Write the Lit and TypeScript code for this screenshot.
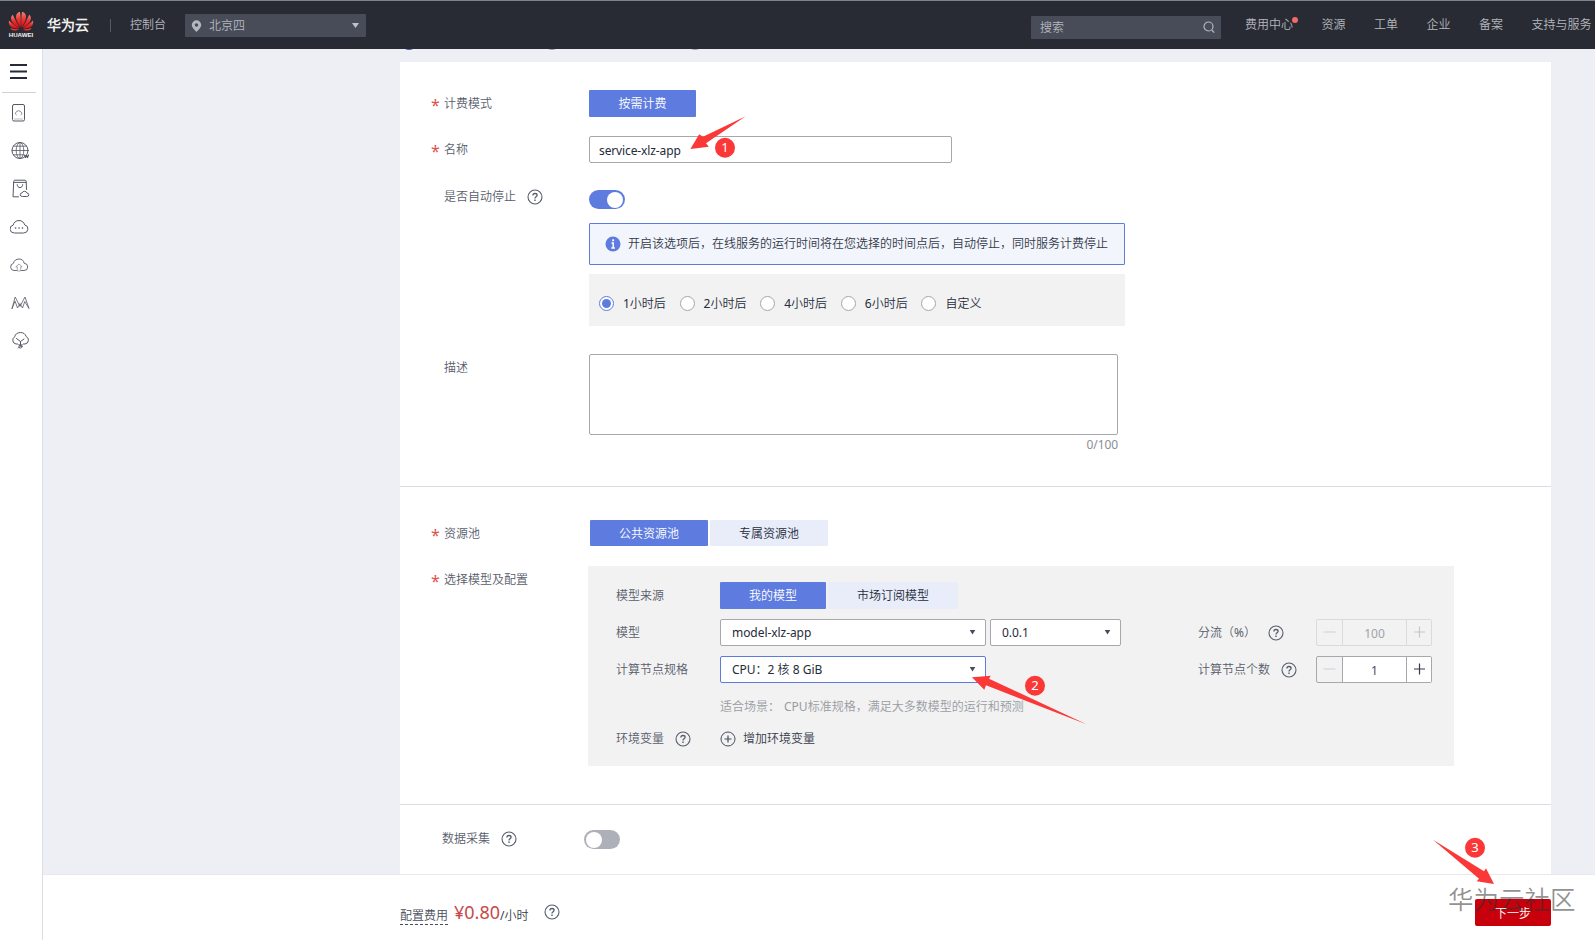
import { LitElement, html, css, svg } from "lit";
import { customElement } from "lit/decorators.js";

const help = html`<svg class="help" width="16" height="16" viewBox="0 0 16 16" fill="none" stroke="#575d6c">
  <circle cx="8" cy="8" r="7" stroke-width="1.1" />
  <path d="M5.9 6.5C5.9 5.2 6.8 4.5 8 4.5s2.1.7 2.1 1.8c0 1.5-2.1 1.6-2.1 3.2" stroke-width="1.3" />
  <path d="M8 10.6v1.4" stroke-width="1.4" />
</svg>`;

const caret = html`<svg class="caret" width="7" height="5" viewBox="0 0 7 5"><path d="M.7 0h5.600L3.500 4.500z" fill="#464c59" /></svg>`;

const sideIcon = (body: unknown) =>
  html`<svg class="side-icon" width="20" height="20" viewBox="0 0 20 20" fill="none" stroke="#555965" stroke-width="1" stroke-linecap="round" stroke-linejoin="round">${body}</svg>`;

const sideIcons = [
  svg`<rect x="2.500" y="1.500" width="12" height="16.500" rx="1.500"/><path d="M6.300 11.800a1.500 1.500 0 0 1 .2-2.800 2.300 2.300 0 0 1 4.200 0 1.500 1.500 0 0 1 .3 2.800" stroke-width=".7"/><path d="M4.500 16h8" stroke-width=".4"/>`,
  svg`<circle cx="10" cy="9.500" r="8"/><ellipse cx="10" cy="9.500" rx="3.800" ry="8" stroke-width=".8"/><path d="M10 1.500v16M2 9.500h16M3.500 5.200h13M3.500 13.800h10" stroke-width=".8"/><path d="M14.500 14l1 2.500 1-2 1 2 1-2.500" stroke-width="1.200"/>`,
  svg`<path d="M8.500 17.800H3L3.700 2.500C3.700 1.500 4.200 1.200 5 1.200h10c.8 0 1.200.5 1.200 1.300l.3 8M3.700 3.400h12.500"/><path d="M7.200 5.700c0 4 5.500 4 5.500 0"/><path d="M12 17.500a1.800 1.800 0 0 1 .1-3.600 2.600 2.600 0 0 1 4.900.2 1.700 1.700 0 0 1 .2 3.400z"/>`,
  svg`<path d="M4 16a4 4 0 0 1-.8-7.900C3.600 5.600 6 3.500 9 3.500s5 2 5.700 4.400A4.100 4.100 0 0 1 14 16z"/><path d="M5.500 11h.1M9 11h.1M12.500 11h.1" stroke-width="1.600"/>`,
  svg`<path d="M6.500 15.500H4a3.600 3.600 0 0 1-.6-7.100C4 5.500 6.200 4 9 4s4.700 1.500 5.200 4.300A3.600 3.600 0 0 1 14 15.500h-2.500" stroke-width=".9"/><path d="M7.300 15.600v-3.800H5.800L9 9l3.200 2.800h-1.500v3.800z" stroke-width=".5"/>`,
  svg`<path d="M2 15.500L5.200 4 10 13.500 15 4 19 15.500 14.800 8.500 12.500 15 10 10.500 7.500 15 5.200 8.500z" stroke-width=".8"/>`,
  svg`<path d="M7.500 13H6a3.900 3.900 0 0 1-1.300-7.200C5 3.300 7.500 1.500 10.500 1.500s5 1.600 5.700 4.100A3.900 3.900 0 0 1 15 13h-1.500"/><path d="M6.500 7.500l4 3L14 8M10.500 10.500v4"/><circle cx="10.500" cy="15.500" r="1.500"/><path d="M8.500 13.800h4M8 17l2.500-1.500" stroke-width=".8"/>`,
];

@customElement("app-root")
export class AppRoot extends LitElement {
  static styles = css`
    :host {
      display: flex; flex-direction: column; position: relative;
      width: 1595px; height: 940px; overflow: hidden; box-sizing: border-box;
      font: 12px/20px "Noto Sans", "Noto Sans CJK SC DemiLight", "Noto Sans CJK SC", sans-serif;
      color: #252b3a; background: #eeeff5;
    }
    * { box-sizing: border-box; }
    svg { display: block; flex: none; }
    .header { height: 49px; flex: none; display: flex; background: #282b33; border-top: 1px solid #7b848a; color: #b4b7bd; white-space: nowrap; line-height: 48px; }
    .logo { margin: 9px 0 0 8px; }
    .brand { margin-left: 13px; width: 63px; font-size: 14px; font-weight: 600; color: #f2f2f2; }
    .vline { width: 1px; height: 13px; background: #555963; margin: 18px 19px 0 0; }
    .console { width: 55px; }
    .region { width: 181px; height: 23px; margin-top: 13px; background: #484c59; border-radius: 1px; display: flex; align-items: center; line-height: 21px; padding: 0 7px 0 6px; }
    .region span { flex: 1; margin-left: 7px; }
    .region span, .region .tri { margin-top: -1px; }
    .search { width: 190px; height: 23px; margin: 15px 24px 0 665px; background: #484c59; border-radius: 1px; display: flex; align-items: center; justify-content: space-between; padding: 0 6px 0 9px; line-height: 25px; }
    .nav { display: flex; gap: 28.500px; }
    .nav span { position: relative; }
    .dot { position: absolute; right: -5px; top: 16px; width: 6px; height: 6px; border-radius: 50%; background: #f06a6a; }
    .body { flex: 1; display: flex; min-height: 0; }
    .side { width: 43px; background: #fff; border-right: 1px solid #dcdee4; flex: none; padding-top: 15px; }
    .burger { margin-left: 10px; }
    .side-sep { height: 1px; background: #d0d1d6; margin: 13px 6px 10px 2px; }
    .side-icon { margin: 0 0 18px 10px; }
    .side-icons { display: flex; flex-direction: column; }
    .main { flex: 1; display: flex; flex-direction: column; min-width: 0; }
    .scroll { flex: 1; overflow: hidden; padding-left: 357px; min-height: 0; }
    .steps { height: 13px; display: flex; gap: 127px; padding-left: 1px; overflow: hidden; }
    .steps i { width: 16px; height: 16px; border-radius: 50%; background: #a0a3b3; margin-top: -15px; }
    .steps i:first-child { background: #4a58a8; }
    .card { width: 1151px; background: #fff; }
    .section { border-bottom: 1px solid #dcdde2; padding-left: 32px; }
    .s1 { height: 425px; padding-top: 28px; }
    .s2 { height: 318px; padding-top: 33px; }
    .s3 { height: 90px; padding: 20px 0 0 9px; border: 0; }
    .row { display: flex; align-items: flex-start; }
    .lab { width: 157px; height: 27px; padding-left: 12px; line-height: 28px; color: #575d6c; display: flex; align-items: center; position: relative; flex: none; white-space: nowrap; }
    .lab.req::before { content: "*"; position: absolute; left: -1px; top: 1px; color: #e0504a; font-size: 16px; }
    .lab .help { margin-left: 11px; }
    .btn { height: 27px; line-height: 28px; text-align: center; background: #e9edfa; color: #252b3a; border-radius: 1px; }
    .btn.on { background: #5e7ce0; color: #fff; font-weight: 500; }
    .group { display: flex; gap: 2px; }
    .pool { margin-left: 1px; }
    .w107 { width: 107px; } .w118 { width: 118px; height: 26px; line-height: 27px; } .w106 { width: 106px; } .w130 { width: 130px; }
    .input { width: 363px; height: 27px; border: 1px solid #a6a8ae; border-radius: 2px; line-height: 27px; padding-left: 9px; letter-spacing: -.12px; }
    .r2 { margin-top: 19px; }
    .r3 { margin-top: 24px; }
    .r3 .lab { line-height: 19px; height: 19px; }
    .r4 { margin-top: 28px; }
    .r5 { margin-top: 19px; }
    .toggle { width: 36px; height: 19px; border-radius: 10px; background: #5e7ce0; display: flex; justify-content: flex-end; align-items: center; padding: 0 2px; }
    .toggle i { width: 16px; height: 16px; border-radius: 50%; background: #fff; }
    .toggle.off { background: #adb0b8; justify-content: flex-start; }
    .r3 .toggle { margin-top: 3px; }
    .alert { margin-top: 14px; width: 536px; height: 42px; background: #f2f5fc; border: 1px solid #5e7ce0; border-radius: 1px; display: flex; align-items: center; padding-left: 15px; gap: 7px; color: #343a4a; white-space: nowrap; }
    .radios { margin-top: 9px; width: 536px; height: 52px; background: #f2f2f2; display: flex; align-items: center; padding: 8px 0 0 10px; }
    .radio { display: flex; align-items: center; gap: 9px; width: 80.600px; white-space: nowrap; line-height: 22px; }
    .radio i { width: 15px; height: 15px; border-radius: 50%; border: 1px solid #a3a6ac; background: #fff; display: grid; place-items: center; flex: none; margin-bottom: 1px; }
    .radio.sel i { border-color: #5e7ce0; }
    .radio.sel i::after { content: ""; width: 9px; height: 9px; border-radius: 50%; background: #5e7ce0; }
    .area { width: 529px; height: 81px; border: 1px solid #a6a8ae; border-radius: 2px; }
    .count { text-align: right; line-height: 19px; color: #8a8e99; letter-spacing: -.1px; }
    .panel { width: 866px; height: 200px; background: #f2f2f2; margin-left: -1px; padding: 16px 22px 0 28px; display: flex; flex-direction: column; gap: 10px; }
    .prow { display: flex; height: 27px; line-height: 27px; color: #575d6c; white-space: nowrap; }
    .plab { width: 104px; display: flex; align-items: center; flex: none; }
    .plab .help { margin-left: 11px; }
    .select { width: 266px; height: 27px; border: 1px solid #a6a8ae; border-radius: 2px; background: #fff; display: flex; align-items: center; justify-content: space-between; padding: 0 9px 0 11px; line-height: 26px; color: #252b3a; letter-spacing: -.06px; }
    .select .caret { margin-bottom: 1px; }
    .select.focus { border-color: #5e7ce0; letter-spacing: 0; }
    .select.ver { width: 131px; margin-left: 4px; }
    .spacer { flex: 1; }
    .qlab { width: 118px; display: flex; align-items: center; line-height: 29px; }
    .qlab .help { margin: 1px 0 0 11px; }
    .qlab.pct .help { margin-left: 12px; }
    .step { width: 116px; height: 27px; border: 1px solid #a6a8ae; border-radius: 2px; display: flex; line-height: 27px; color: #464c59; text-align: center; }
    .step > * { display: grid; place-items: center; }
    .step .m { width: 25px; } .step .p { width: 25px; border-left: 1px solid #a6a8ae; background: #fff; }
    .step svg { margin-bottom: 1px; }
    .step .v { flex: 1; border-left: 1px solid #a6a8ae; background: #fff; }
    .step.dis, .step.dis .v, .step.dis .p { border-color: #d9dadd; background: #f2f2f2; color: #a0a3aa; }
    .hint { color: #999ca3; }
    .hint-text { margin-left: 4px; }
    .env { margin-top: -5px; }
    .add { display: flex; align-items: center; gap: 7px; color: #343a4a; line-height: 29px; }
    .s3 .lab { padding-left: 33px; width: 175px; }
    .s3 .toggle { margin-top: 5px; }
    .footer { height: 66px; flex: none; background: #fff; border-top: 1px solid #e8e9ed; display: flex; align-items: flex-start; padding-left: 357px; position: relative; white-space: nowrap; }
    .cost { margin-top: 30px; height: 20px; border-bottom: 1px dashed #464c59; color: #464c59; line-height: 21px; }
    .price { margin: 22px 0 0 6px; font-size: 18px; line-height: 30px; color: #c7494a; }
    .unit { margin-top: 30px; line-height: 21px; color: #343a4a; }
    .footer .help { margin: 29px 0 0 15px; }
    .next { position: absolute; left: 1432px; top: 24px; width: 76px; height: 27px; background: #c7000b; border-radius: 2px; }
    .next-label { position: absolute; left: 1432px; top: 24px; width: 76px; line-height: 29px; text-align: center; color: #fff; font-weight: 500; }
    .mark { position: absolute; left: 1405px; top: 6px; font-size: 25.500px; line-height: 36px; color: rgba(50, 50, 50, .54); }
    .marks { position: absolute; left: 0; top: 0; pointer-events: none; }
    .num { font: 13px "Noto Sans", sans-serif; fill: #fff; text-anchor: middle; }
  `;

  private renderHeader() {
    return html`<div class="header">
      <svg class="logo" width="26" height="28" viewBox="0 0 26 28">
        <defs><linearGradient id="g" x1="0" y1="0" x2="0" y2="1"><stop offset="0" stop-color="#f2837a" /><stop offset=".5" stop-color="#e8302c" /><stop offset="1" stop-color="#d01018" /></linearGradient></defs>
        <g fill="url(#g)">
          <path d="M12.600 17.500C9 12.500 7 8 8.500 4.500 9.500 2.300 11 2 12 2c.8 5 .9 10 .6 15.500z" />
          <path d="M13.400 17.500C17 12.500 19 8 17.500 4.500 16.500 2.300 15 2 14 2c-.8 5-.9 10-.6 15.500z" />
          <path d="M11.800 17.800C8.500 12.500 6.500 8.500 4.800 4.800 2.500 6.500 2.800 9.500 4 11.500c1.800 3 4.500 5 7.800 6.300z" />
          <path d="M14.200 17.800C17.500 12.500 19.500 8.500 21.200 4.800 23.500 6.500 23.200 9.500 22 11.500c-1.800 3-4.500 5-7.800 6.300z" />
          <path d="M11.300 18.500C7 15.500 3.500 13 1 10.500.2 13.500 1.500 15.800 3.500 17c2.200 1.300 5 1.600 7.800 1.500z" />
          <path d="M14.700 18.500C19 15.500 22.500 13 25 10.500c.8 3-.5 5.300-2.500 6.500-2.200 1.300-5 1.600-7.800 1.500z" />
          <path d="M11 19.200c-3 .2-6 0-8.500-.9 1.200 2.800 4.500 3.500 8.500.9zM15 19.200c3 .2 6 0 8.500-.9-1.200 2.800-4.500 3.500-8.500.9z" />
        </g>
        <text x="13" y="27.300" text-anchor="middle" font-family="Liberation Sans" font-weight="700" font-size="6.200" textLength="24.500" lengthAdjust="spacingAndGlyphs" fill="#f2f2f2">HUAWEI</text>
      </svg>
      <span class="brand">华为云</span>
      <span class="vline"></span>
      <span class="console">控制台</span>
      <div class="region">
        <svg width="11" height="13" viewBox="0 0 10 13"><path fill-rule="evenodd" d="M5 1.300a4.700 4.700 0 0 1 4.700 4.700C9.700 9 5 12.800 5 12.800S.3 9 .3 6A4.700 4.700 0 0 1 5 1.300zM5 4.200a1.800 1.800 0 1 0 0 3.600 1.800 1.800 0 0 0 0-3.600z" fill="#b4b7bd" /></svg>
        <span>北京四</span>
        <svg class="tri" width="7" height="5" viewBox="0 0 7 5"><path d="M0 0h7L3.500 5z" fill="#c0c2c8" /></svg>
      </div>
      <div class="search"><span>搜索</span>
        <svg width="12" height="13" viewBox="0 0 12 13" fill="none" stroke="#b4b7bd" stroke-width="1.200"><circle cx="5.500" cy="5.500" r="4.500" /><path d="M8.700 9l2.600 2.600" /></svg>
      </div>
      <div class="nav"><span>费用中心<i class="dot"></i></span><span>资源</span><span>工单</span><span>企业</span><span>备案</span><span>支持与服务</span></div>
    </div>`;
  }

  private stepper(value: string, disabled: boolean) {
    const plus = disabled ? "#c5c7cc" : "#343a4a";
    return html`<div class="step ${disabled ? "dis" : ""}">
      <span class="m"><svg width="13" height="13"><path d="M.5 6h12" stroke="#cfd0d4" /></svg></span>
      <span class="v">${value}</span>
      <span class="p"><svg width="13" height="13"><path d="M1 6h11M6.500.5v11" stroke=${plus} stroke-width="1.200" /></svg></span>
    </div>`;
  }

  render() {
    return html`
      ${this.renderHeader()}
      <div class="body">
        <div class="side">
          <svg class="burger" width="18" height="15" viewBox="0 0 18 15"><path d="M0 1h17M0 7.500h17M0 14h17" stroke="#252b3a" stroke-width="1.800" /></svg>
          <div class="side-sep"></div>
          <div class="side-icons">${sideIcons.map(sideIcon)}</div>
        </div>
        <div class="main">
          <div class="scroll">
            <div class="steps"><i></i><i></i><i></i></div>
            <div class="card">
              <div class="section s1">
                <div class="row"><div class="lab req">计费模式</div><div class="btn on w107">按需计费</div></div>
                <div class="row r2"><div class="lab req">名称</div><div class="input">service-xlz-app</div></div>
                <div class="row r3">
                  <div class="lab">是否自动停止${help}</div>
                  <div>
                    <div class="toggle"><i></i></div>
                    <div class="alert">
                      <svg width="16" height="16" viewBox="0 0 16 16"><circle cx="8" cy="8" r="7.500" fill="#5e7ce0" /><path d="M6.500 7H8.200v5M6.300 12h3.600" stroke="#fff" stroke-width="1.500" fill="none" /><path d="M7.200 3.300h1.900v1.900H7.200z" fill="#fff" /></svg>
                      <span>开启该选项后，在线服务的运行时间将在您选择的时间点后，自动停止，同时服务计费停止</span>
                    </div>
                    <div class="radios">
                      ${["1小时后", "2小时后", "4小时后", "6小时后", "自定义"].map((t, i) => html`<span class="radio ${i ? "" : "sel"}"><i></i>${t}</span>`)}
                    </div>
                  </div>
                </div>
                <div class="row r4"><div class="lab">描述</div><div><div class="area"></div><div class="count">0/100</div></div></div>
              </div>
              <div class="section s2">
                <div class="row"><div class="lab req">资源池</div><div class="group pool"><div class="btn on w118">公共资源池</div><div class="btn w118">专属资源池</div></div></div>
                <div class="row r5">
                  <div class="lab req">选择模型及配置</div>
                  <div class="panel">
                    <div class="prow"><span class="plab">模型来源</span><div class="group"><div class="btn on w106">我的模型</div><div class="btn w130">市场订阅模型</div></div></div>
                    <div class="prow"><span class="plab">模型</span><div class="select">model-xlz-app${caret}</div><div class="select ver">0.0.1${caret}</div><span class="spacer"></span><span class="qlab pct">分流（%）${help}</span>${this.stepper("100", true)}</div>
                    <div class="prow"><span class="plab">计算节点规格</span><div class="select focus">CPU：2 核 8 GiB${caret}</div><span class="spacer"></span><span class="qlab">计算节点个数${help}</span>${this.stepper("1", false)}</div>
                    <div class="prow hint"><span class="plab"></span><span>适合场景：</span><span class="hint-text">CPU标准规格，满足大多数模型的运行和预测</span></div>
                    <div class="prow env"><span class="plab">环境变量${help}</span><span class="add"><svg width="16" height="16" viewBox="0 0 16 16" fill="none" stroke="#464c59"><circle cx="8" cy="8" r="7" /><path d="M4.500 8h7M8 4.500v7" stroke-width="1.200" /></svg>增加环境变量</span></div>
                  </div>
                </div>
              </div>
              <div class="section s3"><div class="row"><div class="lab">数据采集${help}</div><div class="toggle off"><i></i></div></div></div>
            </div>
          </div>
          <div class="footer">
            <span class="cost">配置费用</span><span class="price">¥0.80</span><span class="unit">/小时</span>${help}
            <span class="next"></span><span class="mark">华为云社区</span><span class="next-label">下一步</span>
          </div>
        </div>
      </div>
      <svg class="marks" width="1595" height="940" viewBox="0 0 1595 940" fill="#fb3838">
        <path d="M690.400 149L699.200 134.300 703 136.700 745.700 116.300 706 143.300 708.800 146.700z" />
        <path d="M972 677.300L990.700 675.700 989 678.700 1087 724.500 986 685.300 984.300 689.700z" />
        <path d="M1494 884L1486 868.300 1484 871.300 1433 839.800 1479 878.700 1476.700 881.300z" />
        <circle cx="725" cy="147.700" r="10" /><circle cx="1035" cy="685.700" r="10" /><circle cx="1475" cy="847.700" r="10" />
        <text class="num" x="725" y="152.300">1</text><text class="num" x="1035" y="690.300">2</text><text class="num" x="1475" y="852.300">3</text>
      </svg>
    `;
  }
}
